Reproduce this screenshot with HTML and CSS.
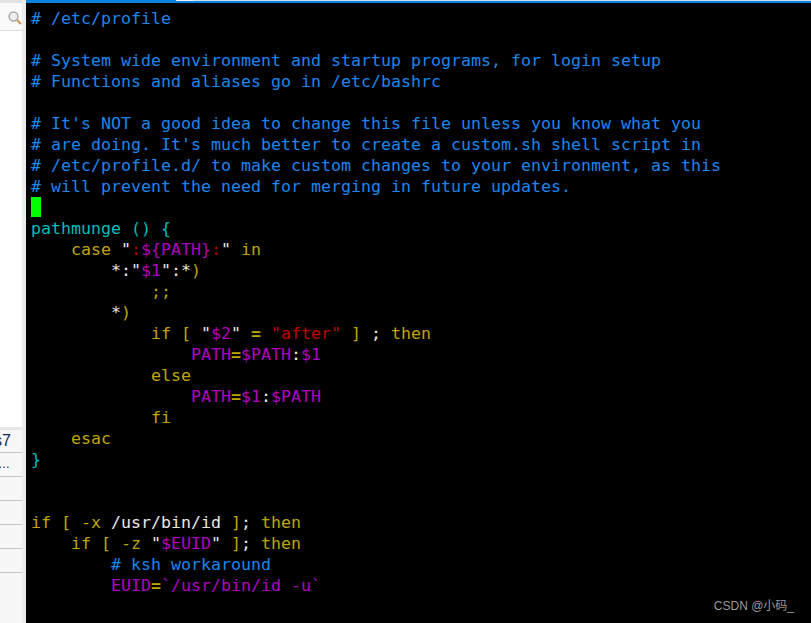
FILE: index.html
```html
<!DOCTYPE html>
<html lang="en">
<head>
<meta charset="utf-8">
<title>/etc/profile</title>
<link rel="stylesheet" href="styles.css">
</head>
<body>
<div class="app">
<aside class="side">
<div class="search"><svg class="mag" width="14" height="14" viewBox="0 0 14 14"><circle cx="5.5" cy="5.5" r="4.4" fill="#eef1f3" stroke="#a9a9a9" stroke-width="1.5"/><path d="M9 9l4 4" stroke="#c9925a" stroke-width="2"/></svg></div>
<div class="side-fill"></div>
<div class="side-list">
<div class="side-row"><span class="side-text">s7</span></div>
<div class="side-row"><span class="side-text side-more">…</span></div>
<div class="side-row"></div>
<div class="side-row"></div>
<div class="side-row"></div>
<div class="side-row"></div>
<div class="side-rest"></div>
</div>
</aside>
<main class="term">
<div class="tabs"><div class="tab-a"></div><div class="tab-b"></div><div class="tab-c"></div></div>
<pre class="code"><span class="c"># /etc/profile</span>

<span class="c"># System wide environment and startup programs, for login setup</span>
<span class="c"># Functions and aliases go in /etc/bashrc</span>

<span class="c"># It's NOT a good idea to change this file unless you know what you</span>
<span class="c"># are doing. It's much better to create a custom.sh shell script in</span>
<span class="c"># /etc/profile.d/ to make custom changes to your environment, as this</span>
<span class="c"># will prevent the need for merging in future updates.</span>
<span class="cursor"> </span>
<span class="f">pathmunge () {</span>
    <span class="y">case</span> <span class="w">"</span><span class="r">:</span><span class="m">${PATH}</span><span class="r">:</span><span class="w">"</span> <span class="y">in</span>
        <span class="w">*:"</span><span class="m">$1</span><span class="w">":*</span><span class="y">)</span>
            <span class="y">;;</span>
        <span class="w">*</span><span class="y">)</span>
            <span class="y">if [</span> <span class="w">"</span><span class="m">$2</span><span class="w">"</span> <span class="y eq">=</span> <span class="r">"after"</span> <span class="y">]</span> <span class="w">;</span> <span class="y">then</span>
                <span class="m">PATH</span><span class="y eq">=</span><span class="m">$PATH</span><span class="w">:</span><span class="m">$1</span>
            <span class="y">else</span>
                <span class="m">PATH</span><span class="y eq">=</span><span class="m">$1</span><span class="w">:</span><span class="m">$PATH</span>
            <span class="y">fi</span>
    <span class="y">esac</span>
<span class="f">}</span>


<span class="y">if [ -x</span> <span class="w">/usr/bin/id</span> <span class="y">]</span><span class="w">;</span> <span class="y">then</span>
    <span class="y">if [ -z</span> <span class="w">"</span><span class="m">$EUID</span><span class="w">"</span> <span class="y">]</span><span class="w">;</span> <span class="y">then</span>
        <span class="c"># ksh workaround</span>
        <span class="m">EUID</span><span class="y eq">=</span><span class="m">`/usr/bin/id -u`</span></pre>
<div class="mark">CSDN @小码_</div>
</main>
</div>
</body>
</html>
```
FILE: styles.css
```css
html, body { margin: 0; padding: 0; height: 100%; overflow: hidden; background: #000; }
.app { display: flex; width: 811px; height: 623px; }
.side { width: 26px; flex: none; box-sizing: border-box; background: #fff; border-right: 4px solid #ececec; display: flex; flex-direction: column; overflow: hidden; }
.search { height: 31px; flex: none; box-sizing: border-box; background: #fafafa; border-top: 3px solid #e2e2e2; border-bottom: 1px solid #dcdcdc; display: flex; justify-content: flex-end; align-items: center; }
.mag { margin-right: 0; margin-top: 2px; }
.side-fill { height: 399px; flex: none; background: #fff; border-bottom: 3px solid #e6e6e6; box-sizing: border-box; }
.side-list { flex: 1; background: #f7f7f7; display: flex; flex-direction: column; }
.side-row { height: 24px; flex: none; box-sizing: border-box; border-bottom: 1px solid #c4c4c4; font: 16px/21px "Liberation Sans", sans-serif; color: #0b2a55; display: flex; justify-content: flex-end; overflow: hidden; white-space: nowrap; }
.side-row:first-child { height: 23px; }
.side-text { padding-right: 11px; }
.side-more { font-size: 12px; line-height: 23px; padding-right: 12px; }
.side-rest { flex: 1; }
.term { flex: 1; position: relative; background: #000; overflow: hidden; }
.tabs { display: flex; align-items: flex-start; height: 3px; background: #0a84e0; }
.tab-a { width: 150px; }
.tab-b { width: 17px; height: 1px; background: #f4f4f4; }
.tab-c { flex: 1; height: 1px; background: #d5dfe6; }
.code { margin: 5px 0 0 5px; font: 16.62px/21px "DejaVu Sans Mono", monospace; color: #e8e8e8; white-space: pre; }
.c { color: #1a86ee; }
.f { color: #00bcbc; }
.y { color: #bfa500; }
.eq { font-weight: bold; }
.r { color: #c00000; }
.m { color: #b000c0; }
.w { color: #e8e8e8; }
.cursor { display: inline-block; width: 10px; height: 20px; vertical-align: top; background: #00ff00; }
.mark { position: absolute; right: 17px; bottom: 9px; font: 12px/16px "Liberation Sans", "Noto Sans CJK SC", sans-serif; color: #9a9a9a; }
```
